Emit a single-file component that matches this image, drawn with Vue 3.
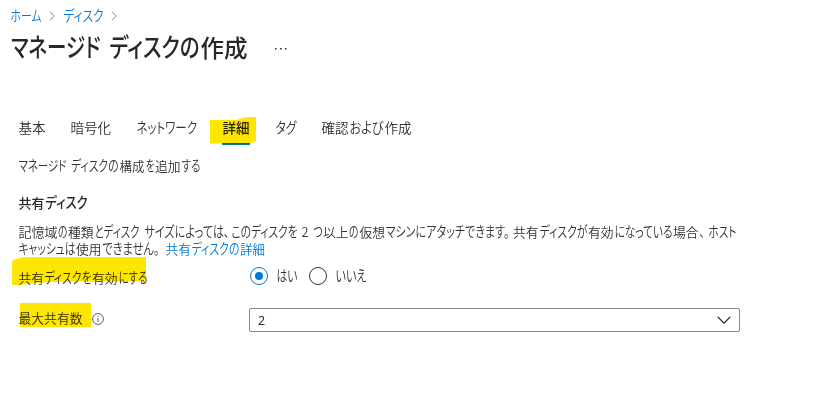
<script setup>
import { h } from 'vue'

const KANA = /^[\u3000-\u30ff]+$/

// One line of condensed Japanese UI text: each run is [text, start, end] in px.
// Kana are drawn slightly taller than kanji, then narrowed to their run.
const Line = (props) => {
  const end = props.runs[props.runs.length - 1][2]
  return h(
    'svg',
    { class: 'line', width: end, height: props.height, style: { fontSize: props.size + 'px' } },
    props.runs.map(([text, a, b]) =>
      h(
        'text',
        { x: a + 0.5, y: props.base, class: { kana: KANA.test(text) }, textLength: b - a, lengthAdjust: 'spacingAndGlyphs' },
        text,
      ),
    ),
  )
}
Line.props = ['runs', 'size', 'height', 'base']

const tabs = [
  { runs: [['基本', 0, 27]] },
  { runs: [['暗号化', 0, 40.5]] },
  { runs: [['ネットワーク', 0, 60.5]] },
  { runs: [['詳細', 0, 27]], active: true },
  { runs: [['タグ', 0, 21]] },
  { runs: [['確認', 0, 27], ['および', 28, 62], ['作成', 63, 90]] },
]
const title = [['マネージド', 0.5, 90], ['ディスクの', 99, 189], ['作成', 190, 237]]
const intro = [['マネージド', 0, 48], ['ディスクの', 52.5, 100], ['構成', 101, 126], ['を', 127, 136], ['追加', 136.5, 162], ['する', 163, 182]]
const section = [['共有', 0, 26], ['ディスク', 27, 69]]
const para1 = [
  ['記憶域', 0, 39], ['の', 39.5, 49], ['種類', 49.5, 75], ['とディスク', 76, 121], ['サイズによっては、', 126, 211],
  ['このディスクを', 213, 279], ['2', 283, 290], ['つ', 295, 304], ['以上', 304.5, 330], ['の', 330.5, 340],
  ['仮想', 341, 366.5], ['マシンにアタッチできます。', 367, 491], ['共有', 494.5, 520], ['ディスクが', 521, 569],
  ['有効', 569.5, 595], ['になっている', 596, 654], ['場合', 654.5, 680], ['、', 681, 686], ['ホスト', 690, 718],
]
const para2 = [['キャッシュは', 0, 57], ['使用', 57.5, 83], ['できません。', 84, 141]]
const link = [['共有', 0, 25.5], ['ディスクの', 26, 74], ['詳細', 74.5, 99.5]]
const enable = [['共有', 0, 25.5], ['ディスクを', 26, 73], ['有効', 73.5, 99], ['にする', 100, 129]]
</script>

<template>
  <main class="page">
    <nav class="crumbs">
      <Line class="blue" :runs="[['ホーム', 0, 31]]" :size="13" :height="18" :base="14" />
      <svg class="sep" width="6" height="10"><path d="M.7.5 5.3 5 .7 9.5" /></svg>
      <Line class="blue" :runs="[['ディスク', 0, 40]]" :size="13" :height="18" :base="14" />
      <svg class="sep" width="6" height="10"><path d="M.7.5 5.3 5 .7 9.5" /></svg>
    </nav>
    <header class="heading">
      <Line class="semibold" :runs="title" :size="23.5" :height="34" :base="27" />
      <svg class="more" width="12" height="2"><path d="M0 0h1.5v1.5H0zM5 0h1.5v1.5H5zM10 0h1.5v1.5H10z" /></svg>
    </header>
    <div class="tabs">
      <div v-for="(tab, i) in tabs" :key="i" class="tab" :class="{ active: tab.active }">
        <Line :class="{ semibold: tab.active }" :runs="tab.runs" :size="13.5" :height="20" :base="15" />
        <svg v-if="tab.active" class="mark tabmark" width="46" height="27"><path d="M0 3H27Q33 0 40 0H46V24L40 26.5H0Z" /></svg>
      </div>
    </div>
    <section class="content">
      <Line :runs="intro" :size="13" :height="20" :base="15" />
      <Line class="section semibold" :runs="section" :size="13" :height="20" :base="15" />
      <Line class="para" :runs="para1" :size="13" :height="17" :base="14.5" />
      <div class="row">
        <Line :runs="para2" :size="13" :height="17" :base="14.5" />
        <Line class="blue link" :runs="link" :size="13" :height="17" :base="14.5" />
      </div>
      <div class="field enable">
        <div class="label">
          <Line class="low" :runs="enable" :size="13" :height="20" :base="15" />
          <svg class="mark enablemark" width="134" height="29"><path d="M0 4Q5 0 18 0H134V24.5H60Q22 25 10 28H0Z" /></svg>
        </div>
        <div class="radios">
          <span class="radio on"></span>
          <Line class="yes" :runs="[['はい', 0, 21]]" :size="13" :height="20" :base="15" />
          <span class="radio"></span>
          <Line class="no" :runs="[['いいえ', 0, 31]]" :size="13" :height="20" :base="15" />
        </div>
      </div>
      <div class="field shares">
        <div class="label">
          <Line :runs="[['最大共有数', 0, 64]]" :size="13" :height="20" :base="13" />
          <svg class="info" width="12" height="12"><circle cx="6" cy="6" r="5.4" /><path d="M6 5v4M6 3v1" /></svg>
          <svg class="mark sharemark" width="71" height="24"><path d="M0 0H71V24H0Z" /></svg>
        </div>
        <div class="select">
          <span>2</span>
          <svg width="14" height="8"><path d="M.7.8 7 7.1 13.3.8" /></svg>
        </div>
      </div>
    </section>
  </main>
</template>

<style>
body { background: #fff; }
.line { display: block; flex: none; overflow: visible; fill: #323130; font-feature-settings: "palt"; }
.line .kana { font-size: 1.1em; }
</style>

<style scoped>
.page { box-sizing: border-box; width: 826px; height: 412px; padding: 7px 0 0 10px; background: #fff; color: #323130; font-family: "Noto Sans CJK JP", sans-serif; font-weight: 350; overflow: hidden; }
.crumbs { display: flex; align-items: center; height: 18px; }
.blue { fill: #0078d4; }
.semibold { font-weight: 500; fill: #292827; }
.sep { margin: 0 8px; fill: none; stroke: #8a8886; }
.heading { display: flex; align-items: center; height: 34px; margin-top: 5px; }
.more { margin-left: 28px; margin-top: 3px; fill: #323130; }
.tabs { display: flex; gap: 25px; margin: 54px 0 0 8px; height: 27px; }
.tab { position: relative; }
.active { box-sizing: border-box; height: 27px; padding-right: 1px; margin-left: .5px; border-bottom: 2px solid #0078a8; }
.mark { position: absolute; fill: #ffe600; mix-blend-mode: multiply; }
.tabmark { left: -12px; top: -1px; }
.content { padding: 11px 0 0 8px; }
.section { margin-top: 17px; }
.para { margin-top: 9px; }
.row { display: flex; }
.link { margin-left: 6px; }
.field { display: flex; align-items: center; }
.label { position: relative; display: flex; align-items: center; width: 231px; }
.enable { height: 20px; margin-top: 10px; }
.low { margin-top: 3px; }
.enablemark { left: -6px; top: -8px; }
.radios { display: flex; align-items: center; margin-left: 1px; }
.radio { display: flex; box-sizing: border-box; width: 18px; height: 18px; align-items: center; justify-content: center; border: 1px solid #323130; border-radius: 50%; }
.on { border-color: #0078d4; }
.on::after { content: ""; width: 8px; height: 8px; border-radius: 50%; background: #0078d4; }
.yes { margin: 0 12px 0 8px; }
.no { margin-left: 8px; }
.shares { height: 24px; margin-top: 22px; }
.info { margin-left: 10px; margin-top: -2px; fill: none; stroke: #605e5c; }
.sharemark { left: 2px; top: -7px; }
.select { display: flex; box-sizing: border-box; width: 491px; height: 24px; align-items: center; justify-content: space-between; padding: 0 8px; border: 1px solid #8a8886; border-radius: 2px; font: 12.5px "Noto Sans", sans-serif; }
.select svg { fill: none; stroke: #201f1e; stroke-width: 1.2; }
</style>
